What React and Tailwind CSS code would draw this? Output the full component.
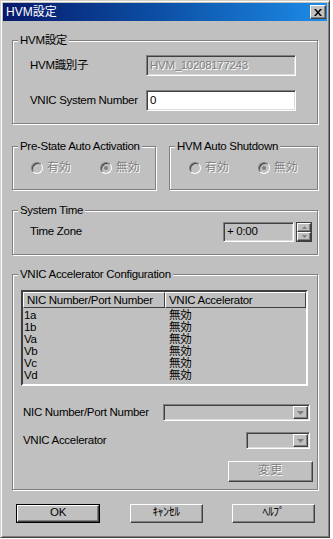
import React from 'react';

const font = { fontFamily: '"Liberation Sans", "Noto Sans CJK JP", sans-serif' };

const raised =
  'border border-t-white border-l-white border-r-[#404040] border-b-[#404040] shadow-[inset_-1px_-1px_0_#808080]';
const sunken =
  'border border-t-[#808080] border-l-[#808080] border-r-white border-b-white shadow-[inset_1px_1px_0_#404040,inset_-1px_-1px_0_#dcdcdc]';
const dim = 'text-[#808080] [text-shadow:1px_1px_0_#fff]';

const Group = ({ title, className = '', children }) => (
  <fieldset className={`border border-[#808080] shadow-[1px_1px_0_#fff,inset_1px_1px_0_#fff] ${className}`}>
    <legend className="ml-[5px] px-[2px] leading-[14px] bg-[#c0c0c0]">{title}</legend>
    {children}
  </fieldset>
);

const Radio = ({ checked, label }) => (
  <div className="flex items-center gap-[4px] h-[14px]">
    <span className="w-[12px] h-[12px] rounded-full border border-t-[#808080] border-l-[#808080] border-r-white border-b-white bg-[#c0c0c0] flex items-center justify-center shadow-[inset_1px_1px_0_#404040]">
      {checked && <span className="w-[4px] h-[4px] rounded-full bg-[#808080]" />}
    </span>
    <span className={`${dim} tracking-[0.5px]`}>{label}</span>
  </div>
);

const Arrow = () => (
  <svg width="7" height="4" viewBox="0 0 7 4">
    <path d="M0 0h7L3.5 4z" fill="#808080" />
  </svg>
);

const Combo = ({ width }) => (
  <div className={`h-[17px] ${width} bg-[#c0c0c0] ${sunken} flex justify-end p-[1px]`}>
    <div className={`w-[15px] h-full bg-[#c0c0c0] ${raised} flex items-center justify-center`}>
      <Arrow />
    </div>
  </div>
);

const rows = ['1a', '1b', 'Va', 'Vb', 'Vc', 'Vd'];

const App = () => {
  return (
    <div style={font} className="w-[330px] h-[538px] bg-[#c0c0c0] text-[11.5px] tracking-[-0.3px] text-black border border-t-[#d4d0c8] border-l-[#d4d0c8] border-r-[#404040] border-b-[#404040] p-[2px] shadow-[inset_1px_1px_0_#fff,inset_-1px_-1px_0_#808080] flex flex-col">
      {/* title bar */}
      <div className="h-[18px] bg-linear-to-r from-[#08196b] to-[#1e8ce8] flex items-center justify-between pl-[3px] pr-[1px]">
        <span className="text-white text-[12px] leading-none tracking-normal">HVM設定</span>
        <div className={`w-[16px] h-[14px] bg-[#c0c0c0] ${raised} flex items-center justify-center`}>
          <svg width="8" height="7" viewBox="0 0 8 7">
            <path d="M0 0h2l2 2.5L6 0h2L5 3.5 8 7H6L4 4.5 2 7H0l3-3.5z" fill="#000" />
          </svg>
        </div>
      </div>

      <div className="flex flex-col px-[9px]">
        <Group title="HVM設定" className="mt-[12px]">
          <div className="flex flex-col gap-[14px] pt-[8px] pb-[12px] pl-[17px] pr-[21px]">
            <div className="flex items-center justify-between">
              <span>HVM識別子</span>
              <div className={`w-[150px] h-[21px] bg-[#c0c0c0] ${sunken} flex items-center pl-[3px] ${dim}`}>
                HVM_10208177243
              </div>
            </div>
            <div className="flex items-center justify-between">
              <span>VNIC System Number</span>
              <div className={`w-[150px] h-[21px] bg-white ${sunken} flex items-center pl-[3px]`}>0</div>
            </div>
          </div>
        </Group>

        <div className="flex gap-[13px] mt-[15px]">
          <Group title="Pre-State Auto Activation" className="w-[144px]">
            <div className="flex gap-[29px] pt-[8px] pb-[14px] pl-[18px]">
              <Radio label="有効" />
              <Radio label="無効" checked />
            </div>
          </Group>
          <Group title="HVM Auto Shutdown" className="flex-1">
            <div className="flex gap-[29px] pt-[8px] pb-[14px] pl-[19px]">
              <Radio label="有効" />
              <Radio label="無効" checked />
            </div>
          </Group>
        </div>

        <Group title="System Time" className="mt-[13px]">
          <div className="flex items-center pt-[5px] pb-[12px] pl-[17px] pr-[5px]">
            <span className="flex-1">Time Zone</span>
            <div className={`w-[71px] h-[20px] bg-[#c0c0c0] ${sunken} flex items-center pl-[3px]`}>+ 0:00</div>
            <div className="ml-[2px] w-[16px] h-[20px] border border-[#404040] flex flex-col">
              <div className={`flex-1 bg-[#c0c0c0] ${raised} flex items-center justify-center`}>
                <svg width="5" height="3" viewBox="0 0 5 3"><path d="M0 3h5L2.5 0z" fill="#808080" /></svg>
              </div>
              <div className={`flex-1 bg-[#c0c0c0] ${raised} flex items-center justify-center`}>
                <svg width="5" height="3" viewBox="0 0 5 3"><path d="M0 0h5L2.5 3z" fill="#808080" /></svg>
              </div>
            </div>
          </div>
        </Group>

        <Group title="VNIC Accelerator Configuration" className="mt-[12px]">
          <div className="flex flex-col pt-[9px] pb-[7px]">
            <div className="ml-[8px] w-[287px] h-[96px] bg-[#c0c0c0] border-2 border-t-[#404040] border-l-[#404040] border-r-white border-b-white flex flex-col">
              <div className="flex h-[16px] leading-[14px]">
                <div className="w-[142px] pl-[3px] border border-t-white border-l-white border-r-[#404040] border-b-[#404040]">
                  NIC Number/Port Number
                </div>
                <div className="flex-1 pl-[3px] border border-t-white border-l-white border-r-[#404040] border-b-[#404040]">
                  VNIC Accelerator
                </div>
              </div>
              <div className="flex flex-col pt-[1px]">
                {rows.map((r) => (
                  <div key={r} className="flex h-[12px] leading-[12px]">
                    <span className="w-[142px] pl-[1px]">{r}</span>
                    <span className="pl-[4px]">無効</span>
                  </div>
                ))}
              </div>
            </div>

            <div className="flex items-center justify-between mt-[18px] pl-[10px] pr-[7px]">
              <span>NIC Number/Port Number</span>
              <Combo width="w-[147px]" />
            </div>
            <div className="flex items-center justify-between mt-[11px] pl-[10px] pr-[7px]">
              <span>VNIC Accelerator</span>
              <Combo width="w-[64px]" />
            </div>
            <div className="flex justify-end mt-[11px] pr-[4px]">
              <div className={`w-[85px] h-[21px] bg-[#c0c0c0] ${raised} flex items-center justify-center ${dim} tracking-[1px]`}>変更</div>
            </div>
          </div>
        </Group>

        <div className="flex justify-between mt-[14px] pl-[4px] pr-[3px]">
          <div className="w-[84px] h-[19px] border border-black">
            <div className={`w-full h-full bg-[#c0c0c0] ${raised} flex items-center justify-center`}>OK</div>
          </div>
          <div className={`w-[73px] h-[19px] bg-[#c0c0c0] ${raised} flex items-center justify-center`}>ｷｬﾝｾﾙ</div>
          <div className={`w-[83px] h-[19px] bg-[#c0c0c0] ${raised} flex items-center justify-center`}>ﾍﾙﾌﾟ</div>
        </div>
      </div>
    </div>
  );
};

export default App;
